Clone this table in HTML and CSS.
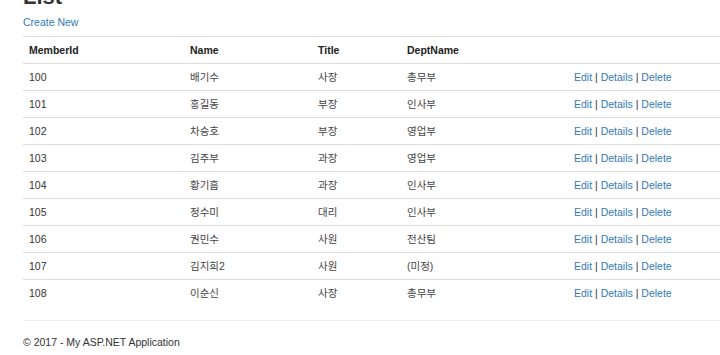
FILE: index.html
```html
<!DOCTYPE html>
<html lang="ko">
<head>
<meta charset="utf-8">
<title>List</title>
<link rel="stylesheet" href="styles.css">
</head>
<body>
<div class="body-content">
  <h2 class="page-title">List</h2>
  <p class="create"><a href="#">Create New</a></p>
  <table class="table">
    <tr>
      <th class="c1">MemberId</th>
      <th class="c2">Name</th>
      <th class="c3">Title</th>
      <th class="c4">DeptName</th>
      <th class="c5"></th>
    </tr>
    <tr><td>100</td><td>배기수</td><td>사장</td><td>총무부</td><td><a href="#">Edit</a> | <a href="#">Details</a> | <a href="#">Delete</a></td></tr>
    <tr><td>101</td><td>홍길동</td><td>부장</td><td>인사부</td><td><a href="#">Edit</a> | <a href="#">Details</a> | <a href="#">Delete</a></td></tr>
    <tr><td>102</td><td>차승호</td><td>부장</td><td>영업부</td><td><a href="#">Edit</a> | <a href="#">Details</a> | <a href="#">Delete</a></td></tr>
    <tr><td>103</td><td>김주부</td><td>과장</td><td>영업부</td><td><a href="#">Edit</a> | <a href="#">Details</a> | <a href="#">Delete</a></td></tr>
    <tr><td>104</td><td>황기흠</td><td>과장</td><td>인사부</td><td><a href="#">Edit</a> | <a href="#">Details</a> | <a href="#">Delete</a></td></tr>
    <tr><td>105</td><td>정수미</td><td>대리</td><td>인사부</td><td><a href="#">Edit</a> | <a href="#">Details</a> | <a href="#">Delete</a></td></tr>
    <tr><td>106</td><td>권민수</td><td>사원</td><td>전산팀</td><td><a href="#">Edit</a> | <a href="#">Details</a> | <a href="#">Delete</a></td></tr>
    <tr><td>107</td><td>김지희2</td><td>사원</td><td>(미정)</td><td><a href="#">Edit</a> | <a href="#">Details</a> | <a href="#">Delete</a></td></tr>
    <tr><td>108</td><td>이순신</td><td>사장</td><td>총무부</td><td><a href="#">Edit</a> | <a href="#">Details</a> | <a href="#">Delete</a></td></tr>
  </table>
  <hr class="rule">
  <footer class="footer">
    <p>&copy; 2017 - My ASP.NET Application</p>
  </footer>
</div>
</body>
</html>
```
FILE: styles.css
```css
html, body {
  margin: 0;
  padding: 0;
  background: #fff;
  overflow: hidden;
}
body {
  font-family: "Liberation Sans", Arial, "Noto Sans CJK KR", sans-serif;
  font-size: 10.5px;
  line-height: 15px;
  color: #333;
}
a {
  color: #337ab7;
  text-decoration: none;
}
.body-content {
  padding-left: 23px;
}
.page-title {
  font-size: 22px;
  line-height: 24px;
  font-weight: bold;
  margin: -15px 0 6px 0;
  color: #333;
}
.create {
  margin: 0 0 6px 0;
}
.table {
  width: 100%;
  border-collapse: collapse;
  border-spacing: 0;
  margin: 0;
}
.table th,
.table td {
  text-align: left;
  vertical-align: top;
  padding: 6px 6px;
  line-height: 14px;
  border-top: 1px solid #dedede;
}
.table td:nth-child(2),
.table td:nth-child(3),
.table td:nth-child(4) {
  color: #444;
}
.table th {
  font-weight: bold;
  color: #222;
}
.c1 { width: 149px; }
.c2 { width: 116px; }
.c3 { width: 77px; }
.c4 { width: 155px; }
.rule {
  margin: 14px 0 0 0;
  border: 0;
  border-top: 1px solid #eee;
  height: 0;
}
.footer p {
  margin: 14px 0 0 0;
}
```
